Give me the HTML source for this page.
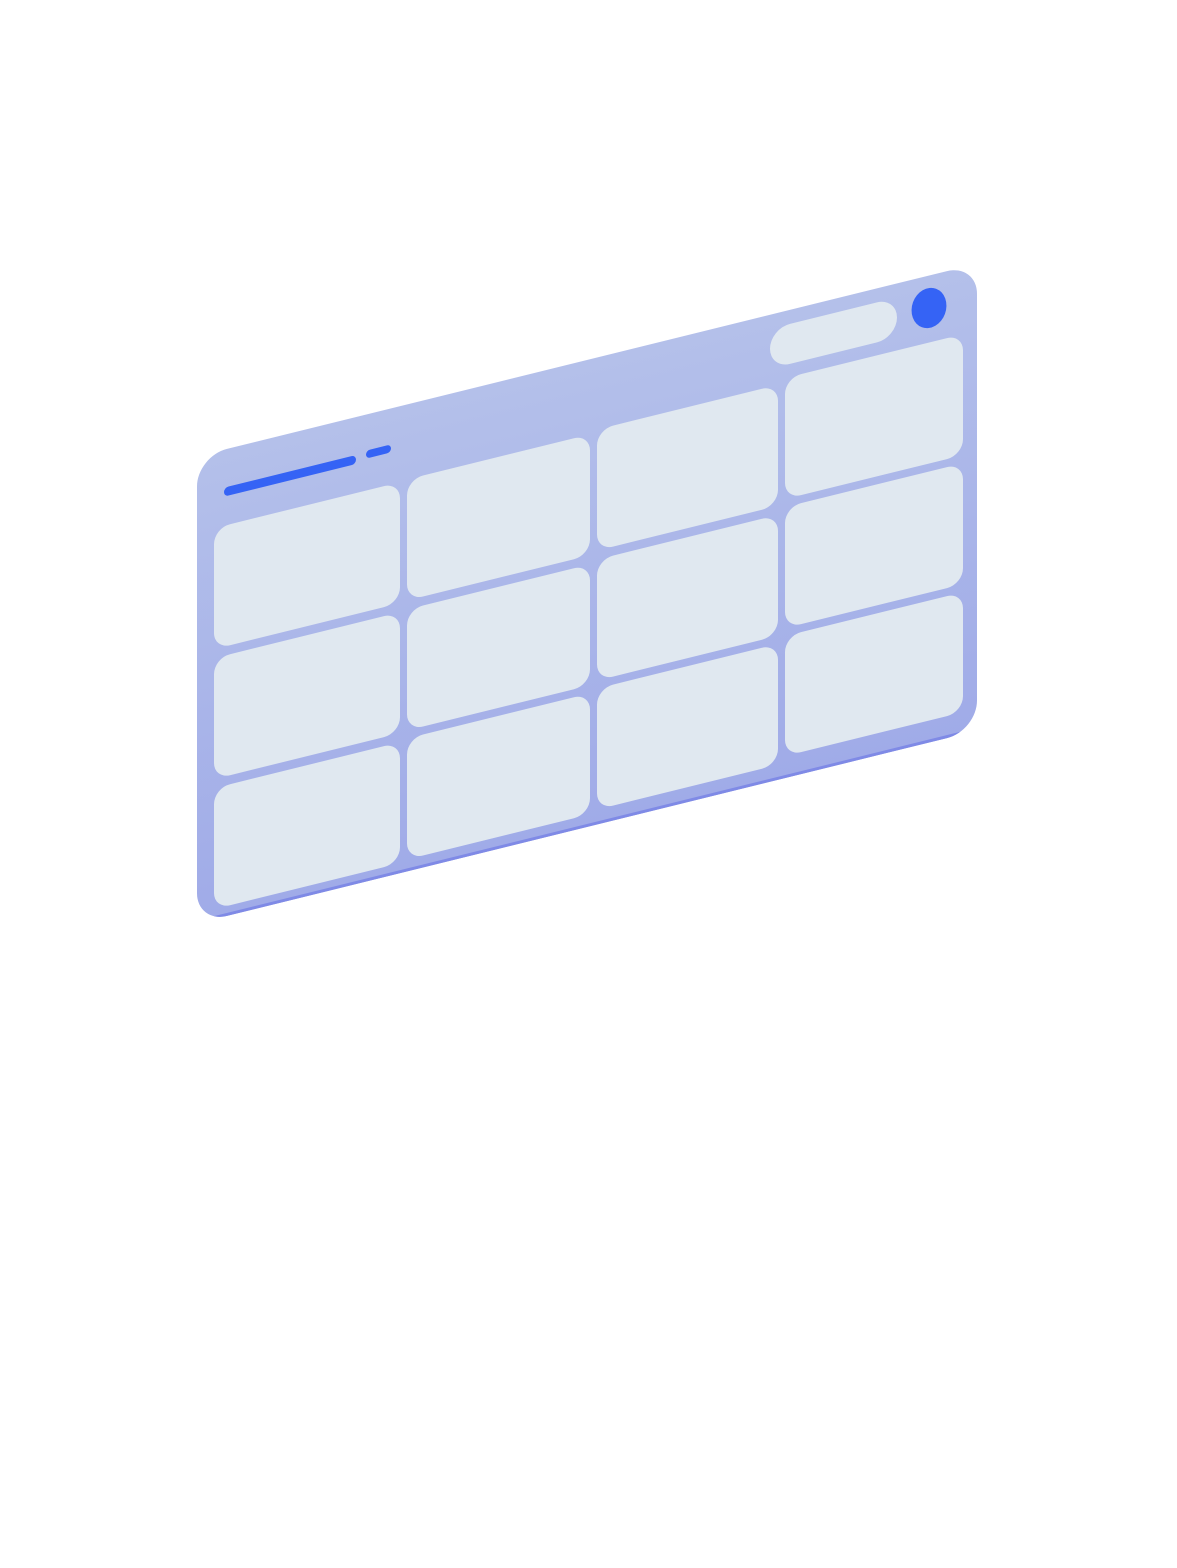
<!DOCTYPE html>
<html><head><meta charset="utf-8"><style>html,body{margin:0;padding:0;background:#fff;}svg{display:block}</style></head>
<body>
<svg width="1177" height="1568" viewBox="0 0 1177 1568" xmlns="http://www.w3.org/2000/svg">
<defs>
<linearGradient id="pg" x1="0" y1="0" x2="0" y2="1">
<stop offset="0" stop-color="#b4c0ea"/><stop offset="1" stop-color="#a0abe8"/>
</linearGradient>
<clipPath id="pc"><rect x="197" y="505" width="780" height="467" rx="30"/></clipPath>
</defs>
<g transform="matrix(1,-0.247,0,1,0,0)">
<rect x="197" y="505" width="780" height="467" rx="30" fill="url(#pg)"/>
<g clip-path="url(#pc)"><rect x="150" y="969" width="880" height="6" fill="#7f8ae6"/></g>
<rect x="224" y="543" width="132" height="9" rx="4.5" fill="#3563f5"/>
<rect x="366" y="541" width="25" height="8" rx="4" fill="#3563f5"/>
<rect x="770" y="519" width="127" height="40" rx="20" fill="#e0e8f0"/>
<g fill="#e0e8f0">
<rect x="214" y="581" width="186" height="121" rx="16"/>
<rect x="407" y="580" width="183" height="121" rx="16"/>
<rect x="597" y="577" width="181" height="121" rx="16"/>
<rect x="785" y="572" width="178" height="121" rx="16"/>
<rect x="214" y="711" width="186" height="121" rx="16"/>
<rect x="407" y="710" width="183" height="121" rx="16"/>
<rect x="597" y="707" width="181" height="121" rx="16"/>
<rect x="785" y="701" width="178" height="121" rx="16"/>
<rect x="214" y="841" width="186" height="121" rx="16"/>
<rect x="407" y="839" width="183" height="121" rx="16"/>
<rect x="597" y="836" width="181" height="121" rx="16"/>
<rect x="785" y="830" width="178" height="120" rx="16"/>
</g>
</g>
<ellipse cx="929" cy="308" rx="17" ry="20.5" transform="rotate(20 929 308)" fill="#3563f5"/>
</svg>
</body></html>
